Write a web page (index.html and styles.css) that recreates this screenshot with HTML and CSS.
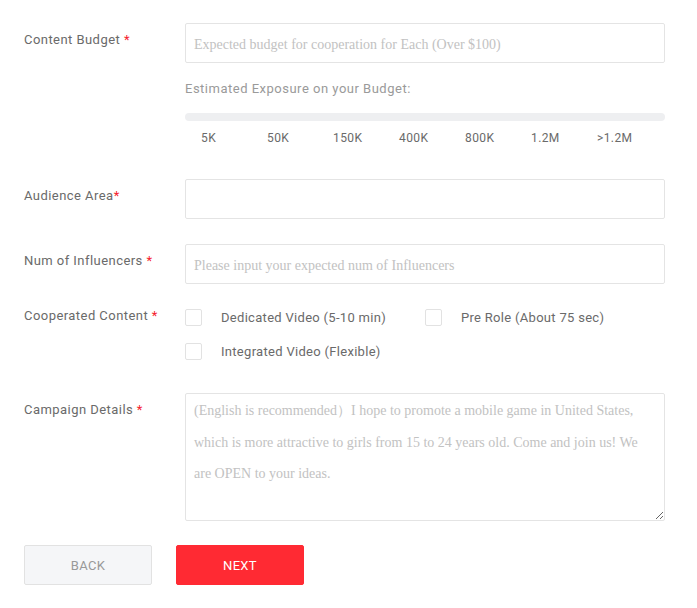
FILE: index.html
```html
<!DOCTYPE html>
<html lang="en">
<head>
    <meta charset="UTF-8">
    <meta name="viewport" content="width=device-width, initial-scale=1.0">
    <title>Campaign Form</title>
    <link rel="stylesheet" href="styles.css">
</head>
<body>

<div id="campaign-form">
    <!-- Budget -->
    <div class="form-row">
        <div class="form-label">Content Budget <span class="required">*</span></div>
        <div class="form-field">
            <input class="text-input" type="text" placeholder="Expected budget for cooperation for Each (Over $100)">
            <div class="exposure-title">Estimated Exposure on your Budget:</div>
            <div class="exposure-track"></div>
            <div class="exposure-marks">
                <span>5K</span>
                <span>50K</span>
                <span>150K</span>
                <span>400K</span>
                <span>800K</span>
                <span>1.2M</span>
                <span>&gt;1.2M</span>
            </div>
        </div>
    </div>

    <!-- Audience -->
    <div class="form-row">
        <div class="form-label">Audience Area<span class="required">*</span></div>
        <div class="form-field">
            <input class="text-input" type="text">
        </div>
    </div>

    <!-- Influencers -->
    <div class="form-row">
        <div class="form-label">Num of Influencers <span class="required">*</span></div>
        <div class="form-field">
            <input class="text-input" type="text" placeholder="Please input your expected num of Influencers">
        </div>
    </div>

    <!-- Content type -->
    <div class="form-row check-row">
        <div class="form-label">Cooperated Content <span class="required">*</span></div>
        <div class="form-field check-grid">
            <label class="check-option"><span class="check-box"></span>Dedicated Video (5-10 min)</label>
            <label class="check-option"><span class="check-box"></span>Pre Role (About 75 sec)</label>
            <label class="check-option"><span class="check-box"></span>Integrated Video (Flexible)</label>
        </div>
    </div>

    <!-- Details -->
    <div class="form-row details-row">
        <div class="form-label">Campaign Details <span class="required">*</span></div>
        <div class="form-field">
            <textarea class="details-input" placeholder="(English is recommended）I hope to promote a mobile game in United States,&#10;which is more attractive to girls from 15 to 24 years old. Come and join us! We&#10;are OPEN to your ideas."></textarea>
        </div>
    </div>

    <div class="button-row">
        <button class="btn btn-back">BACK</button>
        <button class="btn btn-next">NEXT</button>
    </div>
</div>

</body>
</html>
```

FILE: styles.css
```css
body {
    margin: 0;
    font-family: Roboto, "Liberation Sans", sans-serif;
    color: #666;
    background: #fff;
}

#campaign-form {
    padding: 23px 0 0 24px;
    width: 641px;
}

.form-row {
    display: flex;
    margin-bottom: 25px;
}

.form-label {
    width: 161px;
    flex-shrink: 0;
    font-size: 13px;
    line-height: 20px;
    letter-spacing: 0.45px;
    padding-top: 7px;
    color: #6a6a6a;
}

.required {
    color: #f5222d;
}

.form-field {
    width: 480px;
}

.text-input {
    display: block;
    box-sizing: border-box;
    width: 100%;
    height: 40px;
    border: 1px solid #e4e4e4;
    border-radius: 2px;
    padding: 3px 8px 0;
    font-family: "Liberation Serif", serif;
    font-size: 14px;
    outline: none;
}

.text-input::placeholder,
.details-input::placeholder {
    color: #c2c2c2;
}

.exposure-title {
    margin-top: 16px;
    font-size: 13px;
    line-height: 20px;
    letter-spacing: 0.5px;
    color: #9a9a9a;
}

.exposure-track {
    margin-top: 14px;
    height: 8px;
    border-radius: 4px;
    background-color: #eeeff1;
}

.exposure-marks {
    display: flex;
    margin-top: 7px;
    padding-left: 16px;
    font-size: 12px;
    line-height: 20px;
    letter-spacing: 0.4px;
    color: #6a6a6a;
}

.exposure-marks span {
    width: 66px;
}

/* first row sits lower because of the exposure slider */
.form-row:first-child {
    margin-bottom: 31px;
}

.check-row {
    margin-bottom: 33px;
}

.check-row .form-label {
    padding-top: 0;
    margin-top: -3px;
}

.check-grid {
    display: grid;
    grid-template-columns: 240px 240px;
    row-gap: 17px;
}

.check-option {
    display: flex;
    align-items: center;
    font-size: 13px;
    line-height: 17px;
    letter-spacing: 0.3px;
    color: #6a6a6a;
}

.check-box {
    width: 15px;
    height: 15px;
    border: 1px solid #e2e2e2;
    border-radius: 2px;
    margin-right: 19px;
}

.details-row {
    margin-bottom: 24px;
}

.details-input {
    display: block;
    box-sizing: border-box;
    width: 100%;
    height: 128px;
    border: 1px solid #e4e4e4;
    border-radius: 2px;
    padding: 1px 8px;
    font-family: "Liberation Serif", serif;
    font-size: 14px;
    line-height: 31.5px;
    outline: none;
}

.button-row {
    display: flex;
    gap: 24px;
}

.btn {
    width: 128px;
    height: 40px;
    border-radius: 2px;
    font-family: Roboto, "Liberation Sans", sans-serif;
    font-size: 13px;
    letter-spacing: 0.3px;
    cursor: pointer;
}

.btn-back {
    background-color: #f5f6f8;
    border: 1px solid #e2e2e2;
    color: #999;
}

.btn-next {
    background-color: #ff2a33;
    border: 1px solid #ff2a33;
    color: #fff;
}
```
